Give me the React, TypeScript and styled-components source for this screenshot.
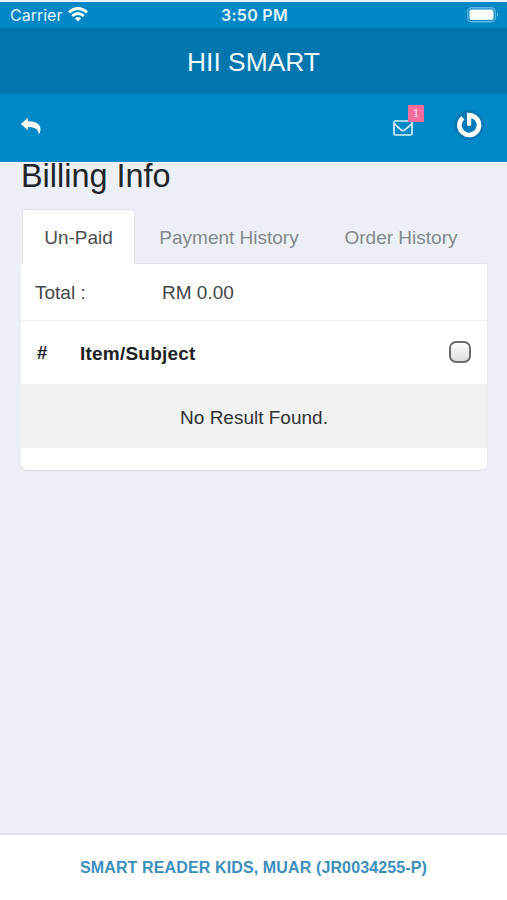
import React from 'react';
import styled, { createGlobalStyle } from 'styled-components';

const GlobalStyle = createGlobalStyle`
  * { box-sizing: border-box; }
  body { margin: 0; background: #ecf0f6; font-family: "Liberation Sans", Arial, sans-serif; color: #333; }
`;

const Text = styled.span<{ $size: number; $spacing?: number }>`
  font-size: ${(p) => p.$size}px;
  letter-spacing: ${(p) => p.$spacing ?? 0}px;
  line-height: 1;
  white-space: nowrap;
`;

const Screen = styled.div`
  display: flex;
  flex-direction: column;
  width: 507px;
  height: 900px;
  overflow: hidden;
  background: #ecf0f6;
`;

const StatusBar = styled.div`
  display: grid;
  grid-template-columns: 1fr auto 1fr;
  align-items: center;
  height: 28px;
  padding: 0 8px 1px 10px;
  border-top: 2px solid #e9f4fa;
  background: #0088c6;
  color: #e4f4fc;
`;

const Carrier = styled.div`
  display: flex;
  align-items: center;
  gap: 6px;
  font-family: Inter, sans-serif;
`;

const Clock = styled.div`
  font-family: Inter, sans-serif;
  font-weight: 600;
  display: flex;
`;

const Battery = styled.svg`
  justify-self: end;
`;

const TitleBar = styled.header`
  display: flex;
  justify-content: center;
  align-items: center;
  height: 66px;
  padding-top: 2px;
  background: #0075ae;
  color: #eef9ff;
`;

const NavBar = styled.nav`
  display: flex;
  align-items: center;
  justify-content: space-between;
  height: 68px;
  padding: 0 22px 7px 20px;
  background: #0089c8;
`;

const IconButton = styled.button`
  display: flex;
  padding: 0;
  border: 0;
  background: none;
`;

const BackButton = styled(IconButton)`
  padding-top: 3px;
`;

const NavActions = styled.div`
  display: flex;
  align-items: center;
  gap: 40px;
`;

const MailButton = styled(IconButton)`
  position: relative;
  padding-top: 7px;
`;

const Badge = styled.span`
  position: absolute;
  top: -8px;
  left: 15px;
  width: 16px;
  height: 17px;
  background: #f76c9b;
  color: #ffe3ee;
  font: 11px/17px "Liberation Sans", sans-serif;
  text-align: center;
`;

const Content = styled.main`
  flex: 1;
  padding: 0 20px 0 21px;
`;

const Heading = styled.h1`
  display: flex;
  height: 47px;
  margin: 0;
  font-weight: 400;
  color: #20252a;

  ${Text} {
    margin-top: -2px;
  }
`;

const Tabs = styled.div`
  display: flex;
  height: 55px;
  padding-left: 1px;
  box-shadow: inset 0 -1px #e3e5e9;
`;

const Tab = styled.button<{ $active?: boolean; $width: number }>`
  width: ${(p) => p.$width}px;
  padding: 0;
  border: 1px solid ${(p) => (p.$active ? '#e0e2e6' : 'transparent')};
  border-bottom: 0;
  border-radius: 5px 5px 0 0;
  background: ${(p) => (p.$active ? '#fff' : 'transparent')};
  color: ${(p) => (p.$active ? '#4d4f52' : '#85888c')};
  font-family: inherit;
`;

const Panel = styled.section`
  height: 206px;
  border-radius: 0 0 6px 6px;
  background: #fff;
  box-shadow: 0 1px 1px #d9dce1;
`;

const Total = styled.div`
  display: grid;
  grid-template-columns: 127px 1fr;
  align-items: center;
  height: 57px;
  padding-left: 14px;
  border-bottom: 1px solid #f0f1f2;
  color: #434548;
`;

const TableHead = styled.div`
  display: grid;
  grid-template-columns: 43px 1fr 22px;
  align-items: center;
  height: 63px;
  padding: 2px 16px 0;
  color: #202224;
  font-weight: 700;
`;

const Checkbox = styled.input`
  appearance: none;
  width: 22px;
  height: 22px;
  margin: 0 0 4px;
  border: 2px solid #6e6e6e;
  border-radius: 7px;
  background: linear-gradient(#fcfcfc, #dcdcdc);
`;

const EmptyRow = styled.div`
  display: flex;
  justify-content: center;
  align-items: center;
  height: 64px;
  padding-top: 3px;
  background: #f1f1f1;
  color: #303234;
`;

const Footer = styled.footer`
  display: flex;
  justify-content: center;
  align-items: center;
  height: 67px;
  border-top: 2px solid #dfe1e6;
  background: #fff;
  color: #3c8fbd;
  font-weight: 700;
`;

export default function App() {
  return (
    <>
      <GlobalStyle />
      <Screen>
        <StatusBar>
          <Carrier>
            <Text $size={16}>Carrier</Text>
            <svg width="20" height="15" viewBox="0 0 20 15" fill="none" stroke="#fff" strokeWidth="2.8">
              <path d="M1 5.3 Q10 -2.2 19 5.3" />
              <path d="M4.2 9 Q10 4 15.8 9" />
              <path d="M6.8 11.2 Q10 8.8 13.2 11.2 L10 14.5Z" fill="#fff" stroke="none" />
            </svg>
          </Carrier>
          <Clock><Text $size={16} $spacing={0.3}>3:50 PM</Text></Clock>
          <Battery width="32" height="16" viewBox="0 0 32 16">
            <rect x=".75" y=".75" width="27.5" height="14" rx="4" fill="none" stroke="#64b7df" strokeWidth="1.3" />
            <rect x="2.5" y="2.5" width="24" height="10.5" rx="2" fill="#fff" />
            <path d="M30 5.5q2 2.2 0 4.5z" fill="#8accea" />
          </Battery>
        </StatusBar>
        <TitleBar><Text $size={26.4}>HII SMART</Text></TitleBar>
        <NavBar>
          <BackButton aria-label="Back">
            <svg width="21" height="18" viewBox="0 0 21 18">
              <path d="M.8 7 L8 .8 V4.3 C15.5 4.3 20.5 7.1 20.5 12.2 C20.5 14.4 19.5 16.3 18.7 17.4 C18.5 12.2 15 10.1 8 10.1 V13.2 Z" fill="#fff" />
            </svg>
          </BackButton>
          <NavActions>
            <MailButton aria-label="Messages">
              <svg width="20" height="16" viewBox="0 0 20 16" fill="none" stroke="#d8f0fc" strokeWidth="1.7" strokeLinejoin="round">
                <rect x="1" y="1" width="18" height="14" rx="1.5" />
                <path d="M1.5 3.8 L8 9.8 Q10 11.4 12 9.8 L18.5 3.8" />
              </svg>
              <Badge>1</Badge>
            </MailButton>
            <IconButton aria-label="Account">
              <svg width="32" height="32" viewBox="0 0 32 32" fill="none">
                <circle cx="16" cy="16" r="15" fill="#0878b6" />
                <path d="M9.8 8.8 A9.8 9.8 0 1 0 20.6 7.4" stroke="#fff" strokeWidth="4.6" />
                <path d="M14 3.8 Q19 3.2 22.5 5.8 L20.5 10 L18.2 9.3 V15.5 Q18.2 17 16.1 17 Q14 17 14 15.5 Z" fill="#fff" />
              </svg>
            </IconButton>
          </NavActions>
        </NavBar>
        <Content>
          <Heading><Text $size={32.4}>Billing Info</Text></Heading>
          <Tabs>
            <Tab $active $width={113}><Text $size={19}>Un-Paid</Text></Tab>
            <Tab $width={188}><Text $size={19}>Payment History</Text></Tab>
            <Tab $width={156}><Text $size={19}>Order History</Text></Tab>
          </Tabs>
          <Panel>
            <Total>
              <Text $size={19}>Total :</Text>
              <Text $size={19}>RM 0.00</Text>
            </Total>
            <TableHead>
              <Text $size={18.5}>#</Text>
              <Text $size={19} $spacing={0.22}>Item/Subject</Text>
              <Checkbox type="checkbox" aria-label="Select all" />
            </TableHead>
            <EmptyRow><Text $size={19}>No Result Found.</Text></EmptyRow>
          </Panel>
        </Content>
        <Footer><Text $size={16} $spacing={0.13}>SMART READER KIDS, MUAR (JR0034255-P)</Text></Footer>
      </Screen>
    </>
  );
}
